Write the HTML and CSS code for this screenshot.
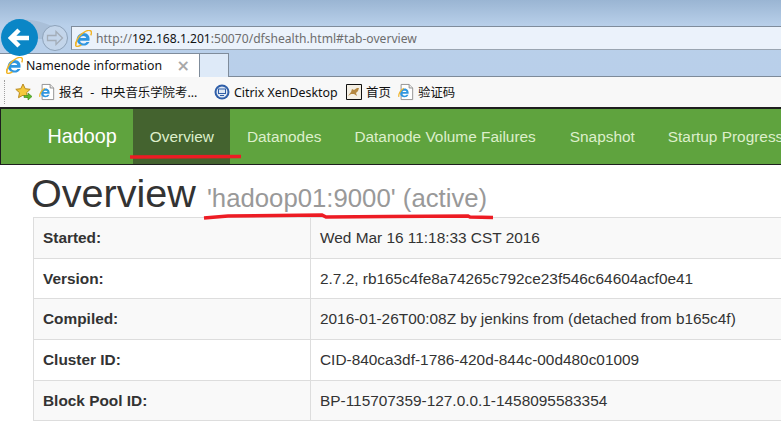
FILE: index.html
```html
<!DOCTYPE html>
<html lang="en">
<head>
  <meta charset="UTF-8" />
  <title>Namenode information</title>
  <link rel="stylesheet" href="styles.css">
</head>
<body>
  <svg class="defs" width="0" height="0">
    <symbol id="ie" viewBox="0 0 20 20">
      <path d="M17 12.500h-11c.2 3.500 5.500 4.500 7.500 1.500h3.500c-2.500 6-12 5.800-14.500-.5C.8 8 5 3.500 10 3.500c5 0 8 4 7 9zM6.200 9.500h7c-.3-3.300-6.500-3.300-7 0z" fill="#2f96e0"/>
      <path d="M1.200 17.500C.5 14 4 7.500 8 4.500 12 1.500 17-.5 18.700 1.300c.9 1 .7 3-.2 5" fill="none" stroke="#f0b429" stroke-width="1.700"/>
      <path d="M1.200 14.500c-1.200 3-.6 4.800 1.300 4.800 1.500 0 3.300-.7 5-1.900" fill="none" stroke="#f0b429" stroke-width="1.700"/>
    </symbol>
    <symbol id="page" viewBox="0 0 18 19">
      <path d="M3.500 1h9l4 4v13h-13z" fill="#fff" stroke="#8a8a8a"/>
      <path d="M12.500 1v4h4" fill="#e8e8e8" stroke="#8a8a8a"/>
      <path d="M12 11.500H5c.1 2.500 3.500 3 4.700 1h2.100c-1.500 4-8.800 3.800-9.300-.8C2.200 8 4.800 5.500 7.500 5.500c3 0 4.800 2.700 4.500 6zM5 9.500h4.500c-.2-2-4.200-2-4.500 0z" fill="#2f96e0"/>
      <path d="M1 15c-.8-3 2-8 5.500-9.800" fill="none" stroke="#f0b429" stroke-width="1.300"/>
    </symbol>
  </svg>

  <div class="chrome">
    <svg class="wing" width="40" height="20" viewBox="0 0 40 20"><path d="M0 1c12-1 22 2 32 6h8v13H0z" fill="#a9bfd8"/></svg>
    <div class="nav-buttons">
      <span class="btn-back">
        <svg width="24" height="22" viewBox="0 0 24 22"><path d="M11 3 3 11l8 8M3.500 11H21" fill="none" stroke="#fff" stroke-width="4.500"/></svg>
      </span>
      <span class="btn-forward">
        <svg width="18" height="16" viewBox="0 0 18 16"><path d="M10 1.500 16.500 8 10 14.500V10.500H1.500V5.500H10z" fill="none" stroke="#a3adb8" stroke-width="1.300"/></svg>
      </span>
    </div>
    <div class="address-bar">
      <svg width="17" height="17"><use href="#ie"/></svg>
      <span class="url">http://<b>192.168.1.201</b>:50070/dfshealth.html#tab-overview</span>
    </div>
    <div class="tab-row">
      <div class="tab">
        <svg width="17" height="17"><use href="#ie"/></svg>
        <span class="tab-title">Namenode information</span>
        <span class="tab-close">×</span>
      </div>
      <div class="tab-new"></div>
    </div>
  </div>

  <div class="favorites">
    <span class="grip"></span>
    <svg width="18" height="18" viewBox="0 0 18 18">
      <path d="M8 1l2.200 4.700 5 .6-3.700 3.400 1 5-4.500-2.500-4.500 2.500 1-5L.8 6.300l5-.6z" fill="#f5c93c" stroke="#b98a1e"/>
      <path d="M9 12.500h4V10l4 3.500-4 3.500v-2.500H9z" fill="#5db82e" stroke="#3d8a1a" stroke-width=".6"/>
    </svg>
    <span class="fav fav-first"><svg width="16" height="18"><use href="#page"/></svg>报名&nbsp; - &nbsp;中央音乐学院考...</span>
    <span class="fav fav-citrix">
      <svg width="16" height="16" viewBox="0 0 16 16"><circle cx="8" cy="8" r="7.500" fill="#2f5ea8"/><circle cx="8" cy="8" r="5.500" fill="#dfe8f4"/><path d="M4 4.500h8v5.500H4z" fill="#2f5ea8"/><path d="M5 5.500h6v3.500H5z" fill="#dfe8f4"/><path d="M6 11h4v1H6z" fill="#2f5ea8"/></svg>
      Citrix XenDesktop</span>
    <span class="fav fav-home">
      <svg width="16" height="16" viewBox="0 0 16 16"><path d="M.5.500h15v15H.5z" fill="#f4efe4" stroke="#111"/><path d="M2 12l3-4 1-3 2 1 3-2 2 0-1 3-2 2 1 3-3-2-3 0z" fill="#b5873f"/></svg>
      首页</span>
    <span class="fav"><svg width="16" height="18"><use href="#page"/></svg>验证码</span>
  </div>

  <nav class="navbar">
    <a class="brand">Hadoop</a>
    <a class="nav-link active">Overview</a>
    <a class="nav-link">Datanodes</a>
    <a class="nav-link nav-link-wide">Datanode Volume Failures</a>
    <a class="nav-link">Snapshot</a>
    <a class="nav-link">Startup Progress</a>
  </nav>

  <div class="page-header">
    <h1>Overview <small>'hadoop01:9000' (active)</small></h1>
  </div>

  <table class="info">
    <tr><th>Started:</th><td>Wed Mar 16 11:18:33 CST 2016</td></tr>
    <tr><th>Version:</th><td>2.7.2, rb165c4fe8a74265c792ce23f546c64604acf0e41</td></tr>
    <tr><th>Compiled:</th><td>2016-01-26T00:08Z by jenkins from (detached from b165c4f)</td></tr>
    <tr><th>Cluster ID:</th><td>CID-840ca3df-1786-420d-844c-00d480c01009</td></tr>
    <tr><th>Block Pool ID:</th><td>BP-115707359-127.0.0.1-1458095583354</td></tr>
  </table>

  <!-- red pen marks drawn over the screenshot -->
  <svg class="marks" width="781" height="427">
    <path d="M130 157 L241 156.500" />
    <path d="M204 218 L228 216 L322 215 L326 217 L388 216.500 L468 216 L470 217 L493 217.500" />
  </svg>
</body>
</html>
```
FILE: styles.css
```css
* {
  margin: 0;
  padding: 0;
  box-sizing: border-box;
}

html, body {
  width: 781px;
  height: 427px;
  overflow: hidden;
}

body {
  position: relative;
  background: #fff;
  font-family: "Liberation Sans", Arial, sans-serif;
  color: #333;
}

.defs {
  position: absolute;
}

/* browser chrome */
.chrome {
  position: relative;
  height: 77px;
  padding-top: 26px;
  background: linear-gradient(#9ab5d3, #b9d0ea 26px, #b9cfea);
  border-bottom: 1px solid #7d8a99;
}

.wing {
  position: absolute;
  top: 19px;
  left: 20px;
}

.nav-buttons {
  position: absolute;
  top: 19px;
  left: 1px;
  display: flex;
  align-items: center;
  gap: 4px;
}

.btn-back {
  width: 37px;
  height: 37px;
  border-radius: 50%;
  background: #0a86c6;
  display: flex;
  align-items: center;
  justify-content: center;
}

.btn-forward {
  width: 26px;
  height: 26px;
  border-radius: 50%;
  border: 1px solid #8ea3ba;
  background: #c3d5ea;
  display: flex;
  align-items: center;
  justify-content: center;
}

.address-bar {
  height: 24px;
  margin-left: 71px;
  padding-left: 3px;
  display: flex;
  align-items: center;
  gap: 4px;
  background: #ebf2fb;
  border: 1px solid #7f8c9b;
  border-right: none;
  border-bottom-color: #9aa5b1;
}

.url {
  font-family: "Noto Sans", sans-serif;
  font-size: 12.100px;
  color: #6d6d6d;
  white-space: nowrap;
}

.url b {
  font-weight: 400;
  color: #111;
}

.tab-row {
  display: flex;
  height: 24px;
  margin-top: 3px;
}

.tab {
  width: 200px;
  padding-left: 6px;
  display: flex;
  align-items: center;
  gap: 3px;
  background: #fff;
  border: 1px solid #7f8c9b;
  border-left: none;
  border-bottom: none;
}

.tab-title {
  flex: 1;
  font-family: "Noto Sans", sans-serif;
  font-size: 12.300px;
  color: #111;
}

.tab-close {
  margin-right: 9px;
  font-family: "DejaVu Sans", sans-serif;
  font-size: 16px;
  font-weight: 700;
  color: #a8a8a8;
}

.tab-new {
  width: 29px;
  background: #deeaf8;
  border: 1px solid #7f8c9b;
  border-left: none;
  border-bottom: none;
}

/* favorites bar */
.favorites {
  height: 30px;
  padding-left: 4px;
  display: flex;
  align-items: center;
  background: #f8f8f8;
  font-family: "Noto Sans", "Noto Sans CJK SC", sans-serif;
  font-size: 12.400px;
  color: #111;
  white-space: nowrap;
}

.grip {
  height: 24px;
  margin-right: 10px;
  border-left: 1px dotted #a0a0a0;
}

.fav {
  display: flex;
  align-items: center;
  gap: 4px;
}

.fav-first {
  margin-left: 6px;
  width: 175px;
}

.fav-citrix {
  width: 132px;
}

.fav-home {
  width: 52px;
}

/* navbar */
.navbar {
  height: 58px;
  padding-left: 30px;
  display: flex;
  background: #5fa33e;
  border: 1px solid #1e1e1e;
  border-top-width: 2px;
  border-right: none;
  white-space: nowrap;
}

.brand {
  padding: 0 16.500px;
  font-size: 19.800px;
  line-height: 55px;
  color: #fff;
}

.nav-link {
  padding: 0 16.500px;
  font-size: 15.400px;
  line-height: 55px;
  color: #ddefcb;
}

.nav-link-wide {
  padding-right: 17.500px;
}

.nav-link.active {
  background: #44632f;
  color: #ddefcb;
}

/* heading */
.page-header {
  height: 52px;
  padding-left: 31px;
}

h1 {
  font-size: 39.600px;
  font-weight: 400;
  line-height: 56px;
  white-space: nowrap;
}

h1 small {
  font-size: 25.740px;
  color: #999;
}

/* info table */
.info {
  width: 800px;
  margin-left: 33px;
  border-collapse: collapse;
  table-layout: fixed;
  font-size: 15.400px;
}

.info tr {
  height: 40.700px;
}

.info tr:nth-child(odd) {
  background: #f9f9f9;
}

.info th,
.info td {
  padding: 0 9px;
  border: 1px solid #ddd;
  text-align: left;
  white-space: nowrap;
}

.info th {
  width: 277px;
}

/* annotation */
.marks {
  position: absolute;
  top: 0;
  left: 0;
  fill: none;
  stroke: #ed1c24;
  stroke-width: 3.500;
}
```
